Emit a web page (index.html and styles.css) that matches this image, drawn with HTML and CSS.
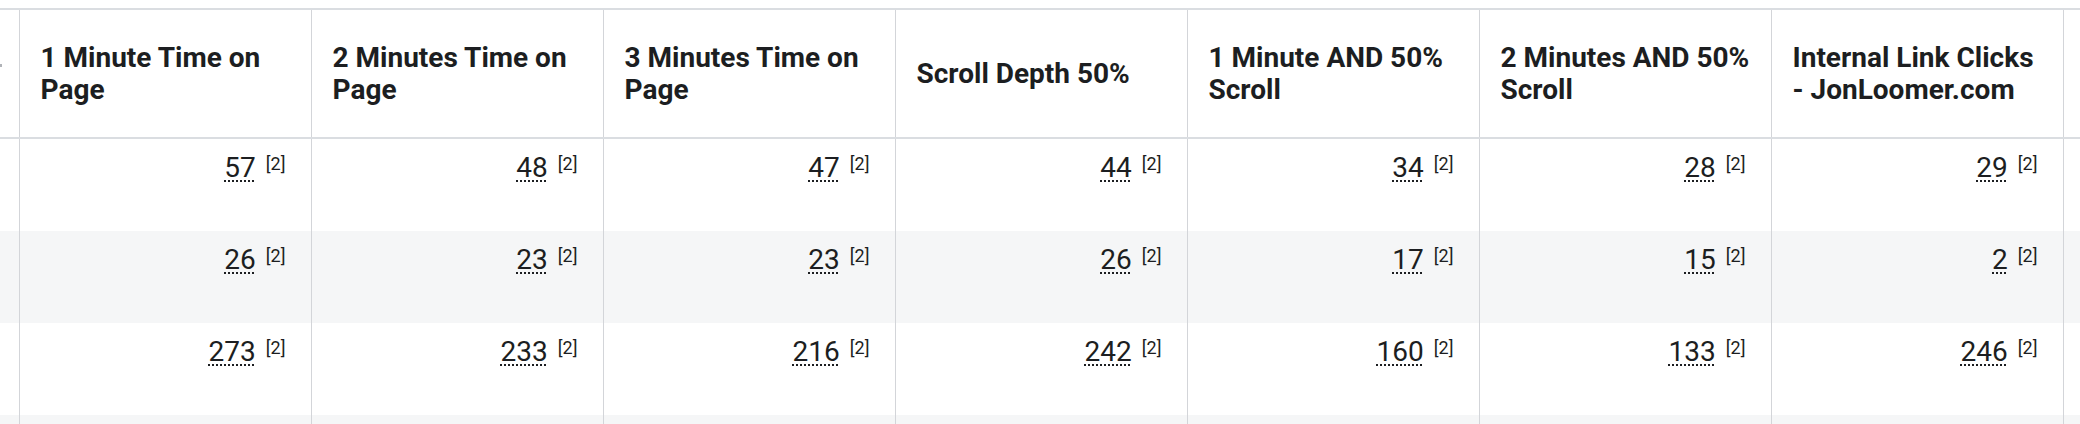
FILE: index.html
```html
<!DOCTYPE html>
<html>
<head>
<meta charset="utf-8">
<link rel="stylesheet" href="styles.css">
</head>
<body>
<div class="viewport">
<table class="report">
  <colgroup>
    <col class="c-stub">
    <col class="c-metric"><col class="c-metric"><col class="c-metric"><col class="c-metric">
    <col class="c-metric"><col class="c-metric"><col class="c-metric"><col class="c-metric">
  </colgroup>
  <thead>
    <tr>
      <th class="stub"><span class="stub-mark"></span></th>
      <th>1 Minute Time on Page</th>
      <th>2 Minutes Time on Page</th>
      <th>3 Minutes Time on Page</th>
      <th>Scroll Depth 50%</th>
      <th>1 Minute AND 50% Scroll</th>
      <th>2 Minutes AND 50% Scroll</th>
      <th>Internal Link Clicks - JonLoomer.com</th>
      <th></th>
    </tr>
  </thead>
  <tbody>
    <tr>
      <td class="stub"></td>
      <td><span class="val"><span class="num">57</span><span class="ref">[2]</span></span></td>
      <td><span class="val"><span class="num">48</span><span class="ref">[2]</span></span></td>
      <td><span class="val"><span class="num">47</span><span class="ref">[2]</span></span></td>
      <td><span class="val"><span class="num">44</span><span class="ref">[2]</span></span></td>
      <td><span class="val"><span class="num">34</span><span class="ref">[2]</span></span></td>
      <td><span class="val"><span class="num">28</span><span class="ref">[2]</span></span></td>
      <td><span class="val"><span class="num">29</span><span class="ref">[2]</span></span></td>
      <td></td>
    </tr>
    <tr class="alt">
      <td class="stub"></td>
      <td><span class="val"><span class="num">26</span><span class="ref">[2]</span></span></td>
      <td><span class="val"><span class="num">23</span><span class="ref">[2]</span></span></td>
      <td><span class="val"><span class="num">23</span><span class="ref">[2]</span></span></td>
      <td><span class="val"><span class="num">26</span><span class="ref">[2]</span></span></td>
      <td><span class="val"><span class="num">17</span><span class="ref">[2]</span></span></td>
      <td><span class="val"><span class="num">15</span><span class="ref">[2]</span></span></td>
      <td><span class="val"><span class="num">2</span><span class="ref">[2]</span></span></td>
      <td></td>
    </tr>
    <tr>
      <td class="stub"></td>
      <td><span class="val"><span class="num">273</span><span class="ref">[2]</span></span></td>
      <td><span class="val"><span class="num">233</span><span class="ref">[2]</span></span></td>
      <td><span class="val"><span class="num">216</span><span class="ref">[2]</span></span></td>
      <td><span class="val"><span class="num">242</span><span class="ref">[2]</span></span></td>
      <td><span class="val"><span class="num">160</span><span class="ref">[2]</span></span></td>
      <td><span class="val"><span class="num">133</span><span class="ref">[2]</span></span></td>
      <td><span class="val"><span class="num">246</span><span class="ref">[2]</span></span></td>
      <td></td>
    </tr>
    <tr class="alt">
      <td class="stub"></td>
      <td></td><td></td><td></td><td></td><td></td><td></td><td></td><td></td>
    </tr>
  </tbody>
</table>
</div>
</body>
</html>
```

FILE: styles.css
```css
html, body {
  margin: 0;
  padding: 0;
  background: #ffffff;
}

body {
  padding-top: 8px;
  font-family: Roboto, "Liberation Sans", Arial, sans-serif;
  color: #1c1e21;
}

.viewport {
  width: 2080px;
  height: 416px;
  overflow: hidden;
}

.report {
  border-collapse: collapse;
  table-layout: fixed;
  width: 2354px;
}

.c-stub { width: 19px; }
.c-metric { width: 292px; }

.report th,
.report td {
  border-left: 1px solid #d3d5d9;
  border-right: 1px solid #d3d5d9;
  padding: 0;
}

.report thead th {
  height: 127px;
  border-top: 2px solid #dadde1;
  border-bottom: 2px solid #dadde1;
  padding: 0 18px 0 21px;
  text-align: left;
  vertical-align: middle;
  font-size: 28px;
  font-weight: 700;
  line-height: 32px;
  color: #1c1e21;
}

.report thead th.stub {
  padding: 0;
  border-left: none;
  text-align: left;
}

.stub-mark {
  display: block;
  width: 2px;
  height: 3px;
  margin-top: -10px;
  background: #b0b3b8;
}

.report td.stub {
  border-left: none;
}

.report tbody td {
  height: 79px;
  vertical-align: top;
  text-align: right;
  padding: 13px 25px 0 0;
}

.report tbody tr.alt td {
  background: #f5f6f7;
}

.val {
  display: inline-flex;
  align-items: flex-start;
  gap: 10px;
}

.num {
  font-size: 28px;
  line-height: 32px;
  font-weight: 400;
  color: #1c1e21;
  text-decoration: underline dotted #1c1e21;
  text-decoration-thickness: 2px;
  text-underline-offset: 3px;
}

.ref {
  font-size: 18px;
  line-height: 20px;
  margin-top: 2px;
  color: #1c1e21;
}
```
